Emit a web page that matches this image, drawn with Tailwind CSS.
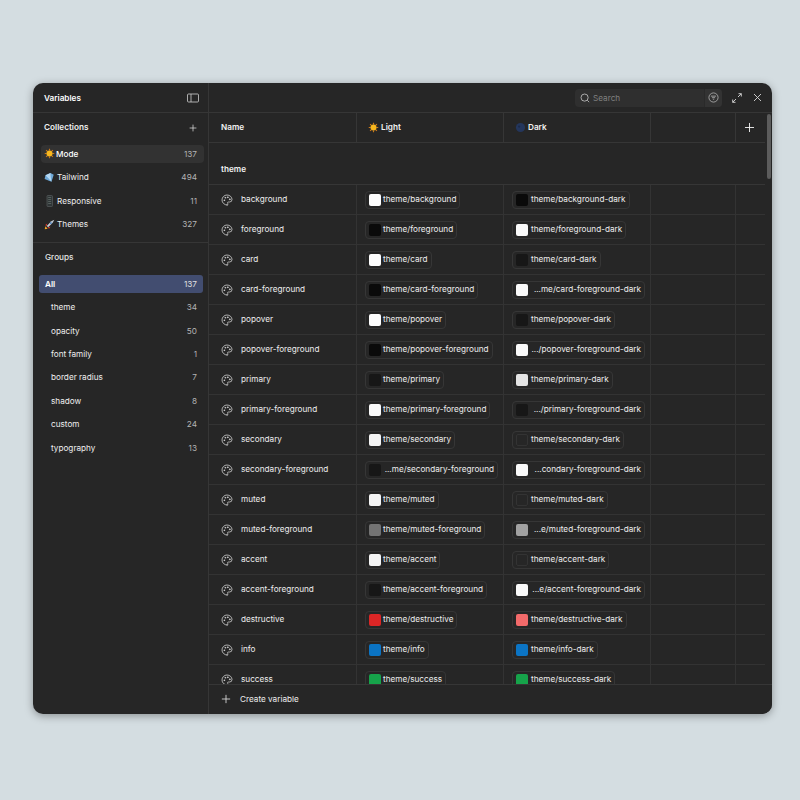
<!DOCTYPE html>
<html lang="en"><head><meta charset="utf-8"><title>Variables</title>
<script src="https://cdn.jsdelivr.net/npm/@tailwindcss/browser@4"></script>
</head>
<body class="w-[800px] h-[800px] bg-[#d4dde1] font-['Inter',sans-serif] text-[8.2px] text-[#eeeeee] pl-[33px] pt-[83px] overflow-hidden">
<svg width="0" height="0" class="absolute"><defs>
<symbol id="pal" viewBox="0 0 24 24" fill="none" stroke="currentColor" stroke-width="1.600" stroke-linecap="round" stroke-linejoin="round"><path d="M12 22a1 1 0 0 1 0-20 10 9 0 0 1 10 9 5 5 0 0 1-5 5h-2.250a1.750 1.750 0 0 0-1.400 2.800l.3.4a1.750 1.750 0 0 1-1.400 2.800z"/><circle cx="13.500" cy="6.500" r=".8" fill="currentColor"/><circle cx="17.500" cy="10.500" r=".8" fill="currentColor"/><circle cx="6.500" cy="12.500" r=".8" fill="currentColor"/><circle cx="8.500" cy="7.500" r=".8" fill="currentColor"/></symbol>
<symbol id="sun" viewBox="0 0 12 12"><g stroke="#c9771a" stroke-width="1.300"><path d="M6 .8v2M6 9.200v2M.8 6h2M9.200 6h2M2.300 2.300l1.400 1.400M8.300 8.300l1.400 1.400M2.300 9.700l1.400-1.400M8.300 3.700l1.400-1.400"/></g><circle cx="6" cy="6" r="3.300" fill="#f9b81e"/></symbol>
<symbol id="plus" viewBox="0 0 12 12" fill="none" stroke="currentColor" stroke-width="1" stroke-linecap="round"><path d="M6 1.500v9M1.500 6h9"/></symbol>
</defs></svg>

<main class="w-[739px] h-[631px] bg-[#262626] rounded-[10px] shadow-[0_2px_8px_rgba(0,0,0,0.35)] flex overflow-hidden">
  <aside class="w-[176px] shrink-0 border-r border-[#363636] flex flex-col">
    <div class="h-[30px] shrink-0 border-b border-[#363636] pl-[11px] pr-[9px] pt-[1px] flex items-center justify-between font-semibold text-white">
      <h1>Variables</h1>
      <svg class="w-[12px] h-[10px] text-[#cfcfcf]" viewBox="0 0 12 10" fill="none" stroke="currentColor" stroke-width=".8"><rect x=".5" y="1" width="11" height="8" rx="1"/><path d="M4 1v8"/></svg>
    </div>
    <div class="h-[29px] shrink-0 pl-[11px] pr-[11px] flex items-center justify-between font-semibold text-[#f0f0f0]">
      <span>Collections</span>
      <svg class="w-[8px] h-[8px]"><use href="#plus"/></svg>
    </div>
    <ul class="pl-[8px] pr-[4px] pt-[3px] border-b border-[#363636] h-[101px] shrink-0 flex flex-col gap-[5.4px]">
      <li class="h-[18px] rounded-[4px] bg-[#323232] pl-[3px] pr-[7px] flex items-center justify-between text-white font-medium"><span class="flex items-center gap-[1px]"><svg class="w-[11px] h-[11px]"><use href="#sun"/></svg>Mode</span><span class="text-[#b4b4b4] font-normal">137</span></li>
      <li class="h-[18px] pl-[3px] pr-[7px] flex items-center justify-between"><span class="flex items-center gap-[2px]"><svg class="w-[11px] h-[11px]" viewBox="0 0 12 12"><g transform="rotate(-25 6 6)"><path d="M3 2h6l2.500 3.200L6 11 .5 5.200z" fill="#6fa9d8"/><path d="M3 2 4.300 5.200 6 11 7.700 5.200 9 2z" fill="#b4d8f3"/></g></svg>Tailwind</span><span class="text-[#b4b4b4]">494</span></li>
      <li class="h-[18px] pl-[3px] pr-[7px] flex items-center justify-between"><span class="flex items-center gap-[2px]"><svg class="w-[11px] h-[12px]" viewBox="0 0 11 12"><rect x="3" y=".5" width="5.500" height="11" rx=".8" fill="#2f3536" stroke="#5f6567" stroke-width=".6"/><path d="M4.200 2.500h3M4.200 4.500h3M4.200 6.500h3M4.200 8.500h3" stroke="#7c8a84" stroke-width=".5"/></svg>Responsive</span><span class="text-[#b4b4b4]">11</span></li>
      <li class="h-[18px] pl-[3px] pr-[7px] flex items-center justify-between"><span class="flex items-center gap-[2px]"><svg class="w-[11px] h-[11px]" viewBox="0 0 12 12"><path d="M.8 11.200 1.500 8l2.500 2.500z" fill="#f5a623"/><path d="M3 7.500 8 2.500l3.200-1.700-1.700 3.200-5 5z" fill="#c3ccd6"/><path d="M3.500 5 1.300 6.500 3 8zM7 8.500 5.500 10.700 4 9z" fill="#d83a2e"/><circle cx="7.500" cy="4.500" r=".9" fill="#3a78c2"/></svg>Themes</span><span class="text-[#b4b4b4]">327</span></li>
    </ul>
    <h2 class="h-[32px] shrink-0 pl-[12px] pb-[3px] flex items-center font-medium text-[#e4e4e4]">Groups</h2>
    <ul class="pl-[6px] pr-[5px] flex flex-col gap-[5.4px]">
      <li class="h-[18px] rounded-[3px] bg-[#424d70] pl-[6px] pr-[6px] flex items-center justify-between font-semibold text-white"><span>All</span><span class="font-normal text-[#e0e0e0]">137</span></li>
      <li class="h-[18px] pl-[12px] pr-[6px] flex items-center justify-between"><span>theme</span><span class="text-[#b4b4b4]">34</span></li>
      <li class="h-[18px] pl-[12px] pr-[6px] flex items-center justify-between"><span>opacity</span><span class="text-[#b4b4b4]">50</span></li>
      <li class="h-[18px] pl-[12px] pr-[6px] flex items-center justify-between"><span>font family</span><span class="text-[#b4b4b4]">1</span></li>
      <li class="h-[18px] pl-[12px] pr-[6px] flex items-center justify-between"><span>border radius</span><span class="text-[#b4b4b4]">7</span></li>
      <li class="h-[18px] pl-[12px] pr-[6px] flex items-center justify-between"><span>shadow</span><span class="text-[#b4b4b4]">8</span></li>
      <li class="h-[18px] pl-[12px] pr-[6px] flex items-center justify-between"><span>custom</span><span class="text-[#b4b4b4]">24</span></li>
      <li class="h-[18px] pl-[12px] pr-[6px] flex items-center justify-between"><span>typography</span><span class="text-[#b4b4b4]">13</span></li>
    </ul>
  </aside>

  <section class="flex-1 min-w-0 flex flex-col">
    <header class="h-[30px] shrink-0 border-b border-[#363636] flex items-center justify-end pr-[10px]">
      <div class="w-[147px] h-[18px] rounded-[4px] bg-[#2f2f2f] flex items-center mr-[10px]">
        <svg class="w-[10px] h-[10px] ml-[5px] text-[#c0c0c0]" viewBox="0 0 12 12" fill="none" stroke="currentColor" stroke-width="1"><circle cx="5.500" cy="5.500" r="4.300"/><path d="M8.700 8.700 11 11"/></svg>
        <span class="ml-[3px] pt-[1px] text-[#808080] flex-1">Search</span>
        <span class="w-[18px] h-[18px] rounded-r-[4px] bg-[#333333] flex items-center justify-center border-l border-[#2a2a2a]">
          <svg class="w-[11px] h-[11px] text-[#c0c0c0]" viewBox="0 0 12 12" fill="none" stroke="currentColor" stroke-width=".8"><circle cx="6" cy="6" r="5"/><path d="M3.200 4.500h5.600M4.300 6.200h3.400M5.300 7.900h1.400"/></svg>
        </span>
      </div>
      <svg class="w-[10px] h-[10px] text-[#d8d8d8] mr-[11px]" viewBox="0 0 10 10" fill="none" stroke="currentColor" stroke-width=".9"><path d="M6 4l3.300-3.300M6.500.7h2.800v2.800M4 6 .7 9.300M.7 6.500v2.800h2.800"/></svg>
      <svg class="w-[9px] h-[9px] text-[#d8d8d8]" viewBox="0 0 9 9" fill="none" stroke="currentColor" stroke-width=".9"><path d="M1 1l7 7M8 1 1 8"/></svg>
    </header>

    <div class="relative flex-1 min-h-0 overflow-hidden">
      <div class="w-[556px]">
        <div class="grid grid-cols-[147px_147px_147px_85px_30px] h-[30px] border-b border-[#363636] font-semibold text-[#f2f2f2]">
          <div class="flex items-center pl-[12px]">Name</div>
          <div class="flex items-center pl-[11px] gap-[2px] border-l border-[#363636]"><svg class="w-[11px] h-[11px]"><use href="#sun"/></svg>Light</div>
          <div class="flex items-center pl-[11px] gap-[2px] border-l border-[#363636]"><svg class="w-[11px] h-[11px]" viewBox="0 0 12 12"><circle cx="6" cy="6" r="5" fill="#24365c"/><circle cx="4.500" cy="5" r="1.200" fill="#1b2a4a"/></svg>Dark</div>
          <div class="border-l border-[#363636]"></div>
          <div class="flex items-center pl-[8px] border-l border-[#363636]"><svg class="w-[11px] h-[11px]"><use href="#plus"/></svg></div>
        </div>
        <div class="h-[42px] border-b border-[#363636] pl-[12px] pt-[11px] flex items-center font-semibold text-[#f0f0f0]">theme</div>

        <div class="grid grid-cols-[147px_147px_147px_85px_30px] auto-rows-[30px]">
          <div class="flex items-center pl-[12px] gap-[8px] border-b border-[#333333]"><svg class="w-[12px] h-[12px] text-[#d0d0d0]"><use href="#pal"/></svg>background</div>
          <div class="flex items-center pl-[8px] border-l border-b border-[#333333]"><span class="h-[18px] flex items-center gap-[2px] border border-[#363636] rounded-[4px] pl-[3px] pr-[3px]"><i class="w-[12px] h-[12px] rounded-[2px] bg-white"></i>theme/background</span></div>
          <div class="flex items-center pl-[8px] border-l border-b border-[#333333]"><span class="h-[18px] flex items-center gap-[3px] border border-[#363636] rounded-[4px] pl-[3px] pr-[3px]"><i class="w-[12px] h-[12px] rounded-[2px] bg-[#0a0a0a]"></i>theme/background-dark</span></div>
          <div class="border-l border-b border-[#333333]"></div><div class="border-l border-b border-[#333333]"></div>

          <div class="flex items-center pl-[12px] gap-[8px] border-b border-[#333333]"><svg class="w-[12px] h-[12px] text-[#d0d0d0]"><use href="#pal"/></svg>foreground</div>
          <div class="flex items-center pl-[8px] border-l border-b border-[#333333]"><span class="h-[18px] flex items-center gap-[2px] border border-[#363636] rounded-[4px] pl-[3px] pr-[3px]"><i class="w-[12px] h-[12px] rounded-[2px] bg-[#0a0a0a]"></i>theme/foreground</span></div>
          <div class="flex items-center pl-[8px] border-l border-b border-[#333333]"><span class="h-[18px] flex items-center gap-[3px] border border-[#363636] rounded-[4px] pl-[3px] pr-[3px]"><i class="w-[12px] h-[12px] rounded-[2px] bg-[#fafafa]"></i>theme/foreground-dark</span></div>
          <div class="border-l border-b border-[#333333]"></div><div class="border-l border-b border-[#333333]"></div>

          <div class="flex items-center pl-[12px] gap-[8px] border-b border-[#333333]"><svg class="w-[12px] h-[12px] text-[#d0d0d0]"><use href="#pal"/></svg>card</div>
          <div class="flex items-center pl-[8px] border-l border-b border-[#333333]"><span class="h-[18px] flex items-center gap-[2px] border border-[#363636] rounded-[4px] pl-[3px] pr-[3px]"><i class="w-[12px] h-[12px] rounded-[2px] bg-white"></i>theme/card</span></div>
          <div class="flex items-center pl-[8px] border-l border-b border-[#333333]"><span class="h-[18px] flex items-center gap-[3px] border border-[#363636] rounded-[4px] pl-[3px] pr-[3px]"><i class="w-[12px] h-[12px] rounded-[2px] bg-[#171717]"></i>theme/card-dark</span></div>
          <div class="border-l border-b border-[#333333]"></div><div class="border-l border-b border-[#333333]"></div>

          <div class="flex items-center pl-[12px] gap-[8px] border-b border-[#333333]"><svg class="w-[12px] h-[12px] text-[#d0d0d0]"><use href="#pal"/></svg>card-foreground</div>
          <div class="flex items-center pl-[8px] border-l border-b border-[#333333]"><span class="h-[18px] flex items-center gap-[2px] border border-[#363636] rounded-[4px] pl-[3px] pr-[3px]"><i class="w-[12px] h-[12px] rounded-[2px] bg-[#0a0a0a]"></i>theme/card-foreground</span></div>
          <div class="flex items-center pl-[8px] border-l border-b border-[#333333]"><span class="w-[133px] h-[18px] flex items-center justify-between border border-[#363636] rounded-[4px] pl-[3px] pr-[3px]"><i class="w-[12px] h-[12px] rounded-[2px] bg-[#fafafa]"></i>...me/card-foreground-dark</span></div>
          <div class="border-l border-b border-[#333333]"></div><div class="border-l border-b border-[#333333]"></div>

          <div class="flex items-center pl-[12px] gap-[8px] border-b border-[#333333]"><svg class="w-[12px] h-[12px] text-[#d0d0d0]"><use href="#pal"/></svg>popover</div>
          <div class="flex items-center pl-[8px] border-l border-b border-[#333333]"><span class="h-[18px] flex items-center gap-[2px] border border-[#363636] rounded-[4px] pl-[3px] pr-[3px]"><i class="w-[12px] h-[12px] rounded-[2px] bg-white"></i>theme/popover</span></div>
          <div class="flex items-center pl-[8px] border-l border-b border-[#333333]"><span class="h-[18px] flex items-center gap-[3px] border border-[#363636] rounded-[4px] pl-[3px] pr-[3px]"><i class="w-[12px] h-[12px] rounded-[2px] bg-[#171717]"></i>theme/popover-dark</span></div>
          <div class="border-l border-b border-[#333333]"></div><div class="border-l border-b border-[#333333]"></div>

          <div class="flex items-center pl-[12px] gap-[8px] border-b border-[#333333]"><svg class="w-[12px] h-[12px] text-[#d0d0d0]"><use href="#pal"/></svg>popover-foreground</div>
          <div class="flex items-center pl-[8px] border-l border-b border-[#333333]"><span class="h-[18px] flex items-center gap-[2px] border border-[#363636] rounded-[4px] pl-[3px] pr-[3px]"><i class="w-[12px] h-[12px] rounded-[2px] bg-[#0a0a0a]"></i>theme/popover-foreground</span></div>
          <div class="flex items-center pl-[8px] border-l border-b border-[#333333]"><span class="w-[133px] h-[18px] flex items-center justify-between border border-[#363636] rounded-[4px] pl-[3px] pr-[3px]"><i class="w-[12px] h-[12px] rounded-[2px] bg-[#fafafa]"></i>.../popover-foreground-dark</span></div>
          <div class="border-l border-b border-[#333333]"></div><div class="border-l border-b border-[#333333]"></div>

          <div class="flex items-center pl-[12px] gap-[8px] border-b border-[#333333]"><svg class="w-[12px] h-[12px] text-[#d0d0d0]"><use href="#pal"/></svg>primary</div>
          <div class="flex items-center pl-[8px] border-l border-b border-[#333333]"><span class="h-[18px] flex items-center gap-[2px] border border-[#363636] rounded-[4px] pl-[3px] pr-[3px]"><i class="w-[12px] h-[12px] rounded-[2px] bg-[#171717]"></i>theme/primary</span></div>
          <div class="flex items-center pl-[8px] border-l border-b border-[#333333]"><span class="h-[18px] flex items-center gap-[3px] border border-[#363636] rounded-[4px] pl-[3px] pr-[3px]"><i class="w-[12px] h-[12px] rounded-[2px] bg-[#e5e5e5]"></i>theme/primary-dark</span></div>
          <div class="border-l border-b border-[#333333]"></div><div class="border-l border-b border-[#333333]"></div>

          <div class="flex items-center pl-[12px] gap-[8px] border-b border-[#333333]"><svg class="w-[12px] h-[12px] text-[#d0d0d0]"><use href="#pal"/></svg>primary-foreground</div>
          <div class="flex items-center pl-[8px] border-l border-b border-[#333333]"><span class="h-[18px] flex items-center gap-[2px] border border-[#363636] rounded-[4px] pl-[3px] pr-[3px]"><i class="w-[12px] h-[12px] rounded-[2px] bg-[#fafafa]"></i>theme/primary-foreground</span></div>
          <div class="flex items-center pl-[8px] border-l border-b border-[#333333]"><span class="w-[133px] h-[18px] flex items-center justify-between border border-[#363636] rounded-[4px] pl-[3px] pr-[3px]"><i class="w-[12px] h-[12px] rounded-[2px] bg-[#171717]"></i>.../primary-foreground-dark</span></div>
          <div class="border-l border-b border-[#333333]"></div><div class="border-l border-b border-[#333333]"></div>

          <div class="flex items-center pl-[12px] gap-[8px] border-b border-[#333333]"><svg class="w-[12px] h-[12px] text-[#d0d0d0]"><use href="#pal"/></svg>secondary</div>
          <div class="flex items-center pl-[8px] border-l border-b border-[#333333]"><span class="h-[18px] flex items-center gap-[2px] border border-[#363636] rounded-[4px] pl-[3px] pr-[3px]"><i class="w-[12px] h-[12px] rounded-[2px] bg-[#f5f5f5]"></i>theme/secondary</span></div>
          <div class="flex items-center pl-[8px] border-l border-b border-[#333333]"><span class="h-[18px] flex items-center gap-[3px] border border-[#363636] rounded-[4px] pl-[3px] pr-[3px]"><i class="w-[12px] h-[12px] rounded-[2px] bg-[#262626] border border-[#333333]"></i>theme/secondary-dark</span></div>
          <div class="border-l border-b border-[#333333]"></div><div class="border-l border-b border-[#333333]"></div>

          <div class="flex items-center pl-[12px] gap-[8px] border-b border-[#333333]"><svg class="w-[12px] h-[12px] text-[#d0d0d0]"><use href="#pal"/></svg>secondary-foreground</div>
          <div class="flex items-center pl-[8px] border-l border-b border-[#333333]"><span class="w-[133px] h-[18px] flex items-center justify-between border border-[#363636] rounded-[4px] pl-[3px] pr-[3px]"><i class="w-[12px] h-[12px] rounded-[2px] bg-[#171717]"></i>...me/secondary-foreground</span></div>
          <div class="flex items-center pl-[8px] border-l border-b border-[#333333]"><span class="w-[133px] h-[18px] flex items-center justify-between border border-[#363636] rounded-[4px] pl-[3px] pr-[3px]"><i class="w-[12px] h-[12px] rounded-[2px] bg-[#fafafa]"></i>...condary-foreground-dark</span></div>
          <div class="border-l border-b border-[#333333]"></div><div class="border-l border-b border-[#333333]"></div>

          <div class="flex items-center pl-[12px] gap-[8px] border-b border-[#333333]"><svg class="w-[12px] h-[12px] text-[#d0d0d0]"><use href="#pal"/></svg>muted</div>
          <div class="flex items-center pl-[8px] border-l border-b border-[#333333]"><span class="h-[18px] flex items-center gap-[2px] border border-[#363636] rounded-[4px] pl-[3px] pr-[3px]"><i class="w-[12px] h-[12px] rounded-[2px] bg-[#f5f5f5]"></i>theme/muted</span></div>
          <div class="flex items-center pl-[8px] border-l border-b border-[#333333]"><span class="h-[18px] flex items-center gap-[3px] border border-[#363636] rounded-[4px] pl-[3px] pr-[3px]"><i class="w-[12px] h-[12px] rounded-[2px] bg-[#262626] border border-[#333333]"></i>theme/muted-dark</span></div>
          <div class="border-l border-b border-[#333333]"></div><div class="border-l border-b border-[#333333]"></div>

          <div class="flex items-center pl-[12px] gap-[8px] border-b border-[#333333]"><svg class="w-[12px] h-[12px] text-[#d0d0d0]"><use href="#pal"/></svg>muted-foreground</div>
          <div class="flex items-center pl-[8px] border-l border-b border-[#333333]"><span class="h-[18px] flex items-center gap-[2px] border border-[#363636] rounded-[4px] pl-[3px] pr-[3px]"><i class="w-[12px] h-[12px] rounded-[2px] bg-[#737373]"></i>theme/muted-foreground</span></div>
          <div class="flex items-center pl-[8px] border-l border-b border-[#333333]"><span class="w-[133px] h-[18px] flex items-center justify-between border border-[#363636] rounded-[4px] pl-[3px] pr-[3px]"><i class="w-[12px] h-[12px] rounded-[2px] bg-[#a1a1a1]"></i>...e/muted-foreground-dark</span></div>
          <div class="border-l border-b border-[#333333]"></div><div class="border-l border-b border-[#333333]"></div>

          <div class="flex items-center pl-[12px] gap-[8px] border-b border-[#333333]"><svg class="w-[12px] h-[12px] text-[#d0d0d0]"><use href="#pal"/></svg>accent</div>
          <div class="flex items-center pl-[8px] border-l border-b border-[#333333]"><span class="h-[18px] flex items-center gap-[2px] border border-[#363636] rounded-[4px] pl-[3px] pr-[3px]"><i class="w-[12px] h-[12px] rounded-[2px] bg-[#f5f5f5]"></i>theme/accent</span></div>
          <div class="flex items-center pl-[8px] border-l border-b border-[#333333]"><span class="h-[18px] flex items-center gap-[3px] border border-[#363636] rounded-[4px] pl-[3px] pr-[3px]"><i class="w-[12px] h-[12px] rounded-[2px] bg-[#262626] border border-[#333333]"></i>theme/accent-dark</span></div>
          <div class="border-l border-b border-[#333333]"></div><div class="border-l border-b border-[#333333]"></div>

          <div class="flex items-center pl-[12px] gap-[8px] border-b border-[#333333]"><svg class="w-[12px] h-[12px] text-[#d0d0d0]"><use href="#pal"/></svg>accent-foreground</div>
          <div class="flex items-center pl-[8px] border-l border-b border-[#333333]"><span class="h-[18px] flex items-center gap-[2px] border border-[#363636] rounded-[4px] pl-[3px] pr-[3px]"><i class="w-[12px] h-[12px] rounded-[2px] bg-[#171717]"></i>theme/accent-foreground</span></div>
          <div class="flex items-center pl-[8px] border-l border-b border-[#333333]"><span class="w-[133px] h-[18px] flex items-center justify-between border border-[#363636] rounded-[4px] pl-[3px] pr-[3px]"><i class="w-[12px] h-[12px] rounded-[2px] bg-[#fafafa]"></i>...e/accent-foreground-dark</span></div>
          <div class="border-l border-b border-[#333333]"></div><div class="border-l border-b border-[#333333]"></div>

          <div class="flex items-center pl-[12px] gap-[8px] border-b border-[#333333]"><svg class="w-[12px] h-[12px] text-[#d0d0d0]"><use href="#pal"/></svg>destructive</div>
          <div class="flex items-center pl-[8px] border-l border-b border-[#333333]"><span class="h-[18px] flex items-center gap-[2px] border border-[#363636] rounded-[4px] pl-[3px] pr-[3px]"><i class="w-[12px] h-[12px] rounded-[2px] bg-[#dc2626]"></i>theme/destructive</span></div>
          <div class="flex items-center pl-[8px] border-l border-b border-[#333333]"><span class="h-[18px] flex items-center gap-[3px] border border-[#363636] rounded-[4px] pl-[3px] pr-[3px]"><i class="w-[12px] h-[12px] rounded-[2px] bg-[#f26a6a]"></i>theme/destructive-dark</span></div>
          <div class="border-l border-b border-[#333333]"></div><div class="border-l border-b border-[#333333]"></div>

          <div class="flex items-center pl-[12px] gap-[8px] border-b border-[#333333]"><svg class="w-[12px] h-[12px] text-[#d0d0d0]"><use href="#pal"/></svg>info</div>
          <div class="flex items-center pl-[8px] border-l border-b border-[#333333]"><span class="h-[18px] flex items-center gap-[2px] border border-[#363636] rounded-[4px] pl-[3px] pr-[3px]"><i class="w-[12px] h-[12px] rounded-[2px] bg-[#0b74c4]"></i>theme/info</span></div>
          <div class="flex items-center pl-[8px] border-l border-b border-[#333333]"><span class="h-[18px] flex items-center gap-[3px] border border-[#363636] rounded-[4px] pl-[3px] pr-[3px]"><i class="w-[12px] h-[12px] rounded-[2px] bg-[#0b74c4]"></i>theme/info-dark</span></div>
          <div class="border-l border-b border-[#333333]"></div><div class="border-l border-b border-[#333333]"></div>

          <div class="flex items-center pl-[12px] gap-[8px] border-b border-[#333333]"><svg class="w-[12px] h-[12px] text-[#d0d0d0]"><use href="#pal"/></svg>success</div>
          <div class="flex items-center pl-[8px] border-l border-b border-[#333333]"><span class="h-[18px] flex items-center gap-[2px] border border-[#363636] rounded-[4px] pl-[3px] pr-[3px]"><i class="w-[12px] h-[12px] rounded-[2px] bg-[#16a34a]"></i>theme/success</span></div>
          <div class="flex items-center pl-[8px] border-l border-b border-[#333333]"><span class="h-[18px] flex items-center gap-[3px] border border-[#363636] rounded-[4px] pl-[3px] pr-[3px]"><i class="w-[12px] h-[12px] rounded-[2px] bg-[#16a34a]"></i>theme/success-dark</span></div>
          <div class="border-l border-b border-[#333333]"></div><div class="border-l border-b border-[#333333]"></div>
        </div>
      </div>
      <div class="absolute right-[1px] top-[1px] w-[4px] h-[65px] rounded-full bg-[#5c5c5c]"></div>
    </div>
    <footer class="h-[30px] shrink-0 border-t border-[#363636] bg-[#262626] pl-[12px] flex items-center gap-[9px]">
      <svg class="w-[10px] h-[10px] text-[#e0e0e0] mb-[2px]"><use href="#plus"/></svg>
      <span>Create variable</span>
    </footer>
  </section>
</main>
</body></html>
